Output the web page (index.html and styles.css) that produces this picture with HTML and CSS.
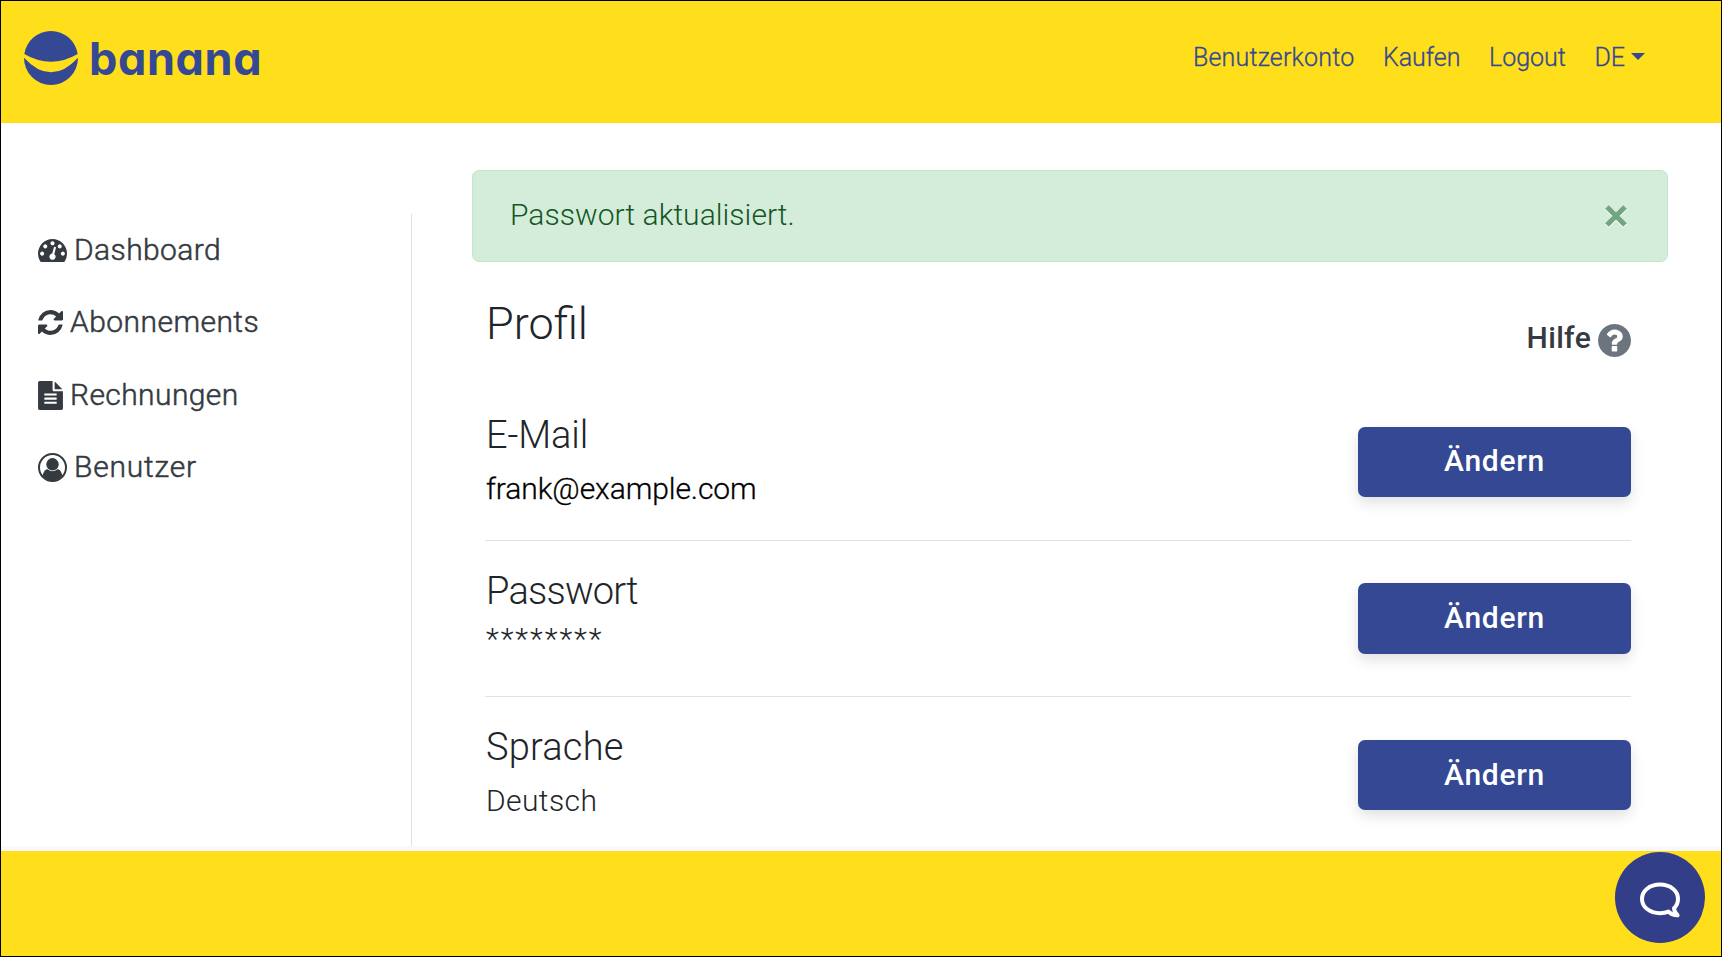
FILE: index.html
```html
<!DOCTYPE html>
<html lang="de">
<head>
<meta charset="utf-8">
<title>Profil</title>
<link rel="stylesheet" href="styles.css">
</head>
<body>
<div class="page">
  <header class="topbar">
    <a class="brand">
      <svg class="brand-mark" viewBox="0 0 54 54"><path d="M.3 23A27 27 0 0 1 53.7 23Q27 38.500 .3 23Z"/><path d="M0 26.700Q27 56 54 26.700A27 27.300 0 0 1 0 26.700Z"/></svg>
      <span class="brand-name">banana</span>
    </a>
    <nav class="topnav">
      <a class="n1">Benutzerkonto</a>
      <a class="n2">Kaufen</a>
      <a class="n3">Logout</a>
      <a class="n4">DE<i class="caret"></i></a>
    </nav>
  </header>
  <div class="body">
    <aside class="sidebar">
      <a class="side-link"><svg class="dash" width="29" height="23" viewBox="0 256 1792 1408"><path d="M384 1152q0-53-37.5-90.5t-90.5-37.5-90.5 37.5-37.5 90.5 37.5 90.5 90.5 37.5 90.5-37.5 37.5-90.5zm192-448q0-53-37.5-90.5t-90.5-37.5-90.5 37.5-37.5 90.5 37.5 90.5 90.5 37.5 90.5-37.5 37.5-90.5zm428 481l101-382q6-26-7.5-48.5t-38.5-29.5-48 6.5-30 39.5l-101 382q-60 5-107 43.5t-63 98.5q-20 77 20 146t117 89 146-20 89-117q16-60-6-117t-72-91zm660-33q0-53-37.5-90.5t-90.5-37.5-90.5 37.5-37.5 90.5 37.5 90.5 90.5 37.5 90.5-37.5 37.5-90.5zm-640-640q0-53-37.5-90.5t-90.5-37.5-90.5 37.5-37.5 90.5 37.5 90.5 90.5 37.5 90.5-37.5 37.5-90.5zm448 192q0-53-37.5-90.5t-90.5-37.5-90.5 37.5-37.5 90.5 37.5 90.5 90.5 37.5 90.5-37.5 37.5-90.5zm320 448q0 261-141 483-19 29-54 29h-1402q-35 0-54-29-141-221-141-483 0-182 71-348t191-286 286-191 348-71 348 71 286 191 191 286 71 348z"/></svg><span class="s1">Dashboard</span></a>
      <a class="side-link"><svg width="25" height="25" viewBox="128 128 1536 1536"><path d="M1639 1056q0 5-1 7-64 268-268 434.5t-478 166.5q-146 0-282.5-55t-243.5-157l-129 129q-19 19-45 19t-45-19-19-45v-448q0-26 19-45t45-19h448q26 0 45 19t19 45-19 45l-137 137q71 66 161 102t187 36q134 0 250-65t186-179q11-17 53-117 8-23 30-23h192q13 0 22.5 9.5t9.5 22.5zm25-800v448q0 26-19 45t-45 19h-448q-26 0-45-19t-19-45 19-45l138-138q-148-137-349-137-134 0-250 65t-186 179q-11 17-53 117-8 23-30 23h-199q-13 0-22.5-9.5t-9.5-22.5v-7q65-268 270-434.5t480-166.5q146 0 284 55.5t245 156.5l130-129q19-19 45-19t45 19 19 45z"/></svg><span class="s2">Abonnements</span></a>
      <a class="side-link"><svg width="25" height="29" viewBox="128 0 1536 1792"><path d="M1596 476q14 14 28 36h-472v-472q22 14 36 28zm-476 164h544v1056q0 40-28 68t-68 28h-1344q-40 0-68-28t-28-68v-1600q0-40 28-68t68-28h800v544q0 40 28 68t68 28zm160 736v-64q0-14-9-23t-23-9h-704q-14 0-23 9t-9 23v64q0 14 9 23t23 9h704q14 0 23-9t9-23zm0-256v-64q0-14-9-23t-23-9h-704q-14 0-23 9t-9 23v64q0 14 9 23t23 9h704q14 0 23-9t9-23zm0-256v-64q0-14-9-23t-23-9h-704q-14 0-23 9t-9 23v64q0 14 9 23t23 9h704q14 0 23-9t9-23z"/></svg><span class="s3">Rechnungen</span></a>
      <a class="side-link"><svg width="29" height="29" viewBox="0 0 29 29"><circle class="ring" cx="14.5" cy="14.5" r="13.5"/><circle cx="14.5" cy="11.3" r="6.2"/><path d="M4.7 22.8C5.4 18.7 7.2 16.3 9.6 16.3C12.6 18.9 16.4 18.9 19.4 16.3C21.8 16.3 23.6 18.7 24.3 22.8C19 29.2 10 29.2 4.7 22.8Z"/></svg><span class="s4">Benutzer</span></a>
    </aside>
    <main class="content">
      <div class="alert"><span>Passwort aktualisiert.</span><svg class="close" width="22" height="22" viewBox="0 0 22 22"><path d="M2 2L20 20M20 2L2 20"/></svg></div>
      <div class="head">
        <h1>Profil</h1>
        <a class="help"><span>Hilfe</span><svg width="33" height="33" viewBox="128 128 1536 1536"><path d="M1024 1376v-192q0-14-9-23t-23-9h-192q-14 0-23 9t-9 23v192q0 14 9 23t23 9h192q14 0 23-9t9-23zm256-672q0-88-55.5-163t-138.5-116-170-41q-243 0-371 213-15 24 8 42l132 100q7 6 19 6 16 0 25-12 53-68 86-92 34-24 86-24 48 0 85.5 26t37.5 59q0 38-20 61t-68 45q-63 28-115.5 86.5t-52.5 125.5v36q0 14 9 23t23 9h192q14 0 23-9t9-23q0-19 21.5-49.5t54.5-49.5q32-18 49-28.5t46-35 44.5-48 28-60.5 12.5-81zm384 192q0 209-103 385.5t-279.5 279.5-385.5 103-385.5-103-279.5-279.5-103-385.5 103-385.5 279.5-279.5 385.5-103 385.5 103 279.5 279.5 103 385.5z"/></svg></a>
      </div>
      <section class="row">
        <div><h2 class="t1">E-Mail</h2><p class="value email">frank@example.com</p></div>
        <button class="btn">Ändern</button>
      </section>
      <section class="row">
        <div><h2 class="t2">Passwort</h2><p class="value stars">********</p></div>
        <button class="btn tall">Ändern</button>
      </section>
      <section class="row last">
        <div><h2 class="t3">Sprache</h2><p class="value lang">Deutsch</p></div>
        <button class="btn low">Ändern</button>
      </section>
    </main>
  </div>
  <footer class="footer">
    <button class="chat"><svg width="42" height="38" viewBox="0 0 42 38"><path d="M29.500 30.600C27 31.700 24.200 32.200 21 32.200C10.600 32.200 3 25.900 3 17.900S10.600 3.600 21 3.600S39 9.900 39 17.900C39 21.500 37.600 24.700 35 27.200C35.200 30 36.600 32.400 38.600 34.300C34.800 34.400 31.800 32.900 29.500 30.600Z"/></svg></button>
  </footer>
</div>
</body>
</html>
```
FILE: styles.css
```css
* { box-sizing: border-box; }
body { margin: 0; font-family: Roboto, "Liberation Sans", sans-serif; color: #212529; }
.page { width: 1722px; height: 957px; border: 1px solid #000; display: flex; flex-direction: column; overflow: hidden; background: #fff; }
h1, h2, p { margin: 0; font-weight: 300; }

.topbar { height: 122px; flex: none; background: #ffdf1c; display: flex; justify-content: space-between; align-items: flex-start; color: #344893; }
.brand { display: flex; padding: 30px 0 0 23px; }
.brand-mark { width: 54px; height: 54px; fill: #344893; }
.brand-name { font: 700 45px/56px Inter, sans-serif; font-feature-settings: "cv11"; margin-left: 11px; letter-spacing: .6px; }
.topnav { display: flex; gap: 28.5px; padding: 37px 76px 0 0; font-size: 25px; line-height: 40px; font-weight: 300; -webkit-text-stroke: .3px currentColor; }
.topnav a { white-space: nowrap; }
.n1 { letter-spacing: .2px; }
.caret { display: inline-block; margin-left: 6px; border: 7px solid transparent; border-top-color: #344893; border-bottom: 0; vertical-align: 6px; }

.body { flex: none; height: 728px; display: flex; border-bottom: 5px solid #f9f9fb; }
.sidebar { width: 411px; margin-top: 91px; border-right: 1px solid #dee2e6; padding-left: 37px; }
.side-link { height: 72.5px; display: flex; align-items: center; gap: 7px; font-size: 30px; line-height: 36px; font-weight: 300; color: #343a40; fill: #343a40; }
.side-link span { margin-top: -1px; -webkit-text-stroke: .5px currentColor; }
.dash { margin-top: 1px; }
.s1 { letter-spacing: .4px; }
.s2 { letter-spacing: .45px; }
.s3 { letter-spacing: .4px; }
.s4 { letter-spacing: .8px; }
.ring { fill: none; stroke: #343a40; stroke-width: 2; }

.content { width: 1256px; padding: 47px 0 0 60px; }
.alert { height: 92px; border: 1px solid #c3e6cb; border-radius: 7px; background: #d4edda; color: #155724; font-size: 30px; letter-spacing: .05px; font-weight: 300; display: flex; align-items: center; justify-content: space-between; padding: 0 40px 0 37px; }
.alert span { margin-top: -3px; }
.close { fill: none; stroke: #73a480; stroke-width: 5; filter: drop-shadow(0 1px 0 #fff); }
.head { height: 123px; display: flex; justify-content: space-between; padding: 32px 37px 0 14px; }
h1 { font-size: 45px; line-height: 60px; }
.help { display: flex; gap: 7px; height: 33px; margin-top: 30px; font-size: 30px; line-height: 28px; letter-spacing: .3px; font-weight: 500; color: #343a40; fill: #6c757d; }
.row { height: 156px; margin: 0 37px 0 13px; padding-left: 1px; border-bottom: 1px solid #dee2e6; display: flex; justify-content: space-between; }
.last { border: 0; }
h2 { font-size: 38px; line-height: 50px; margin-top: 25px; }
.t1 { letter-spacing: -.1px; }
.t2 { letter-spacing: -.8px; }
.t3 { letter-spacing: .2px; }
.value { font-size: 30px; line-height: 40px; margin-top: 9px; }
.email { color: #000; letter-spacing: -.08px; -webkit-text-stroke: .3px currentColor; }
.stars { letter-spacing: 1.95px; margin-top: 3px; }
.lang { letter-spacing: .4px; }
.btn { width: 273px; height: 70px; margin-top: 42px; border: 0; border-radius: 7px; background: #344893; color: #fff; font: 500 30px/68px Roboto, sans-serif; letter-spacing: .7px; padding: 0 0 2px; box-shadow: 0 6px 14px rgba(0, 0, 0, .12); }
.tall { height: 71px; }
.low { margin-top: 43px; padding-bottom: 1px; }

.footer { flex: 1; background: #ffdf1c; display: flex; justify-content: flex-end; padding: 1px 16px 0 0; }
.chat { width: 90px; height: 91px; border: 0; border-radius: 50%; background: #323e87; padding: 4px 0 0; display: flex; align-items: center; justify-content: center; }
.chat svg { fill: none; stroke: #fff; stroke-width: 4; stroke-linejoin: round; }
```
